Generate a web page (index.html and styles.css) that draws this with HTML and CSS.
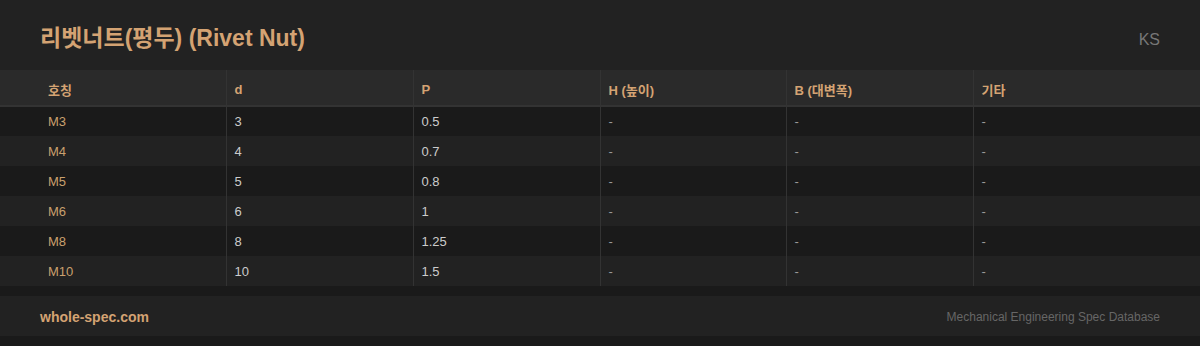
FILE: index.html
```html
<!DOCTYPE html>
<html lang="ko">
<head>
<meta charset="utf-8">
<link rel="stylesheet" href="styles.css">
</head>
<body>
<div class="page">
  <header class="top">
    <h1 class="title">리벳너트(평두) (Rivet Nut)</h1>
    <span class="std">KS</span>
  </header>
  <table class="spec">
    <colgroup>
      <col class="c1"><col class="cm"><col class="cm"><col class="cn"><col class="cm"><col class="c6">
    </colgroup>
    <thead>
      <tr><th>호칭</th><th>d</th><th>P</th><th>H (높이)</th><th>B (대변폭)</th><th>기타</th></tr>
    </thead>
    <tbody>
      <tr><td>M3</td><td>3</td><td>0.5</td><td>-</td><td>-</td><td>-</td></tr>
      <tr><td>M4</td><td>4</td><td>0.7</td><td>-</td><td>-</td><td>-</td></tr>
      <tr><td>M5</td><td>5</td><td>0.8</td><td>-</td><td>-</td><td>-</td></tr>
      <tr><td>M6</td><td>6</td><td>1</td><td>-</td><td>-</td><td>-</td></tr>
      <tr><td>M8</td><td>8</td><td>1.25</td><td>-</td><td>-</td><td>-</td></tr>
      <tr><td>M10</td><td>10</td><td>1.5</td><td>-</td><td>-</td><td>-</td></tr>
    </tbody>
  </table>
  <footer class="foot">
    <span class="site">whole-spec.com</span>
    <span class="tag">Mechanical Engineering Spec Database</span>
  </footer>
</div>
</body>
</html>
```
FILE: styles.css
```css
* { box-sizing: border-box; }
html, body { margin: 0; padding: 0; }
body {
  background: #1a1a1a;
  font-family: "Liberation Sans", Arial, "Noto Sans CJK KR", sans-serif;
  width: 1200px;
  height: 346px;
  overflow: hidden;
}
.page { display: flex; flex-direction: column; }
.top {
  height: 70px;
  background: #222222;
  padding: 0 40px;
  display: flex;
  align-items: center;
  justify-content: space-between;
}
.title {
  margin: 0;
  font-size: 23px;
  font-weight: 700;
  color: #d4a373;
  padding-top: 2px;
}
.std { color: #777777; font-size: 16px; padding-top: 10px; }
.spec {
  width: 1200px;
  border-collapse: collapse;
  table-layout: fixed;
  font-size: 13px;
}
.c1 { width: 226px; }
.cm { width: 187px; }
.cn { width: 186px; }
.c6 { width: 227px; }
.spec th {
  height: 36px;
  background: #2a2a2a;
  color: #d4a373;
  font-weight: 700;
  text-align: left;
  padding: 3px 8px 0 8px;
  border-bottom: 2px solid #333333;
  border-left: 1px solid #333333;
}
.spec td {
  height: 30px;
  padding: 0 8px;
  color: #cccccc;
  border-left: 1px solid #333333;
}
.spec th:first-child, .spec td:first-child { padding-left: 48px; border-left: none; }
.spec td:first-child { color: #c9a06e; }
.spec td:nth-child(n+4) { color: #999999; }
.spec tbody tr:nth-child(odd) td { background: #1a1a1a; }
.spec tbody tr:nth-child(even) td { background: #222222; }
.foot {
  margin-top: 10px;
  height: 40px;
  background: #222222;
  padding: 0 40px;
  display: flex;
  align-items: center;
  justify-content: space-between;
}
.site { color: #d4a373; font-weight: 700; font-size: 14px; padding-top: 2px; }
.tag { color: #666666; font-size: 12px; padding-top: 2px; }
```
